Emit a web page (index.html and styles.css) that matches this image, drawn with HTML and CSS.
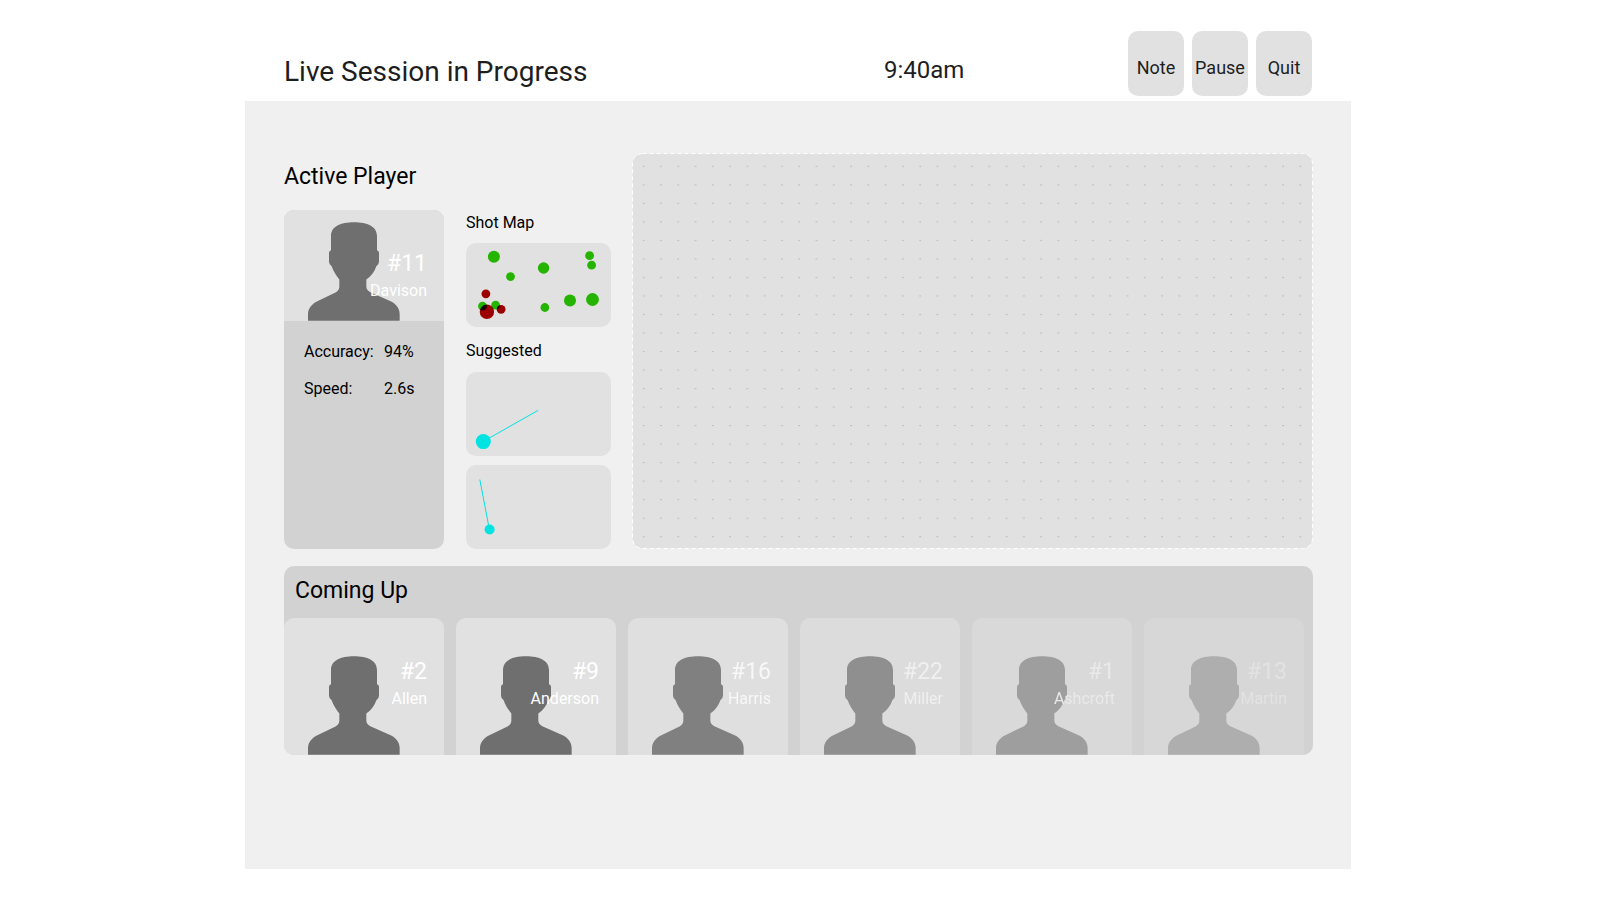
FILE: index.html
```html
<!DOCTYPE html>
<html lang="en">
<head>
	<meta charset="utf-8">
	<title>Live Session</title>
	<link rel="stylesheet" href="styles.css">
</head>
<body>
	<svg class="defs" aria-hidden="true">
		<symbol id="person" viewBox="0 0 276 296">
			<path d="M0 296V276C0 258 12 245 28 237L84 210Q94 204 94 194V172C86 162 76 147 71 132Q63 128 63 118V92Q63 86 69 84V42C69 12 98 0 138 0S207 12 207 42V84Q213 86 213 92V118Q213 128 205 132C200 147 190 162 175 172V194Q175 204 187 210L248 237C264 245 275 258 275 276V296Z"/>
		</symbol>
	</svg>
	<div class="page">
		<header class="header">
			<h1 class="title">Live Session in Progress</h1>
			<time class="clock">9:40am</time>
			<div class="actions">
				<button class="btn" type="button">Note</button>
				<button class="btn" type="button">Pause</button>
				<button class="btn" type="button">Quit</button>
			</div>
		</header>
		<main class="main">
			<div class="session">
				<section class="active">
					<h2 class="heading">Active Player</h2>
					<div class="active-row">
						<div class="player-card">
							<div class="portrait">
								<svg class="person"><use href="#person"/></svg>
								<p class="label"><span class="number">#11</span><span class="name">Davison</span></p>
							</div>
							<dl class="stats">
								<dt>Accuracy:</dt><dd>94%</dd>
								<dt>Speed:</dt><dd>2.6s</dd>
							</dl>
						</div>
						<div class="maps">
							<h3 class="subheading">Shot Map</h3>
							<svg class="map" viewBox="0 0 145 84">
								<g class="shots">
									<circle cx="27.9" cy="13.8" r="6"/>
									<circle cx="44.5" cy="33.6" r="4.4"/>
									<circle cx="77.6" cy="25" r="5.7"/>
									<circle cx="123.6" cy="12.7" r="4.4"/>
									<circle cx="125.6" cy="22.2" r="4.4"/>
									<circle cx="126.5" cy="56.5" r="6.4"/>
									<circle cx="104" cy="57.4" r="6"/>
									<circle cx="78.9" cy="64.5" r="4.4"/>
									<circle cx="16.5" cy="63.2" r="4.4"/>
									<circle cx="29.6" cy="62.2" r="4.4"/>
									<circle class="miss" cx="19.9" cy="50.8" r="4.4"/>
									<circle class="miss" cx="35.1" cy="66.3" r="4.4"/>
									<circle class="miss" cx="20.9" cy="68.8" r="7.2"/>
								</g>
							</svg>
							<h3 class="subheading spaced">Suggested</h3>
							<svg class="map aim" viewBox="0 0 145 84">
								<path d="M17.2 69.5L72.2 38.3"/>
								<circle cx="17.3" cy="69.6" r="7.5"/>
							</svg>
							<svg class="map aim" viewBox="0 0 145 84">
								<path d="M23.4 64.5L13.8 14.5"/>
								<circle cx="23.6" cy="64.5" r="5"/>
							</svg>
						</div>
					</div>
				</section>
				<section class="court">
					<svg class="dots">
						<pattern id="dot" x="3" y="4" width="17.28" height="18.52" patternUnits="userSpaceOnUse">
							<circle cx="8.7" cy="9.3" r="0.6" fill="#999"/>
						</pattern>
						<rect class="edge" x="0.5" y="0.5" rx="10"/>
						<rect x="3" y="4" width="99%" height="98%" fill="url(#dot)"/>
					</svg>
				</section>
			</div>
			<section class="queue">
				<h2 class="heading queue-heading">Coming Up</h2>
				<ul class="queue-list">
					<li class="queue-card">
						<svg class="person"><use href="#person"/></svg>
						<p class="label"><span class="number">#2</span><span class="name">Allen</span></p>
					</li>
					<li class="queue-card">
						<svg class="person"><use href="#person"/></svg>
						<p class="label"><span class="number">#9</span><span class="name">Anderson</span></p>
					</li>
					<li class="queue-card third">
						<svg class="person"><use href="#person"/></svg>
						<p class="label"><span class="number">#16</span><span class="name">Harris</span></p>
					</li>
					<li class="queue-card fourth">
						<svg class="person"><use href="#person"/></svg>
						<p class="label"><span class="number">#22</span><span class="name">Miller</span></p>
					</li>
					<li class="queue-card fifth">
						<svg class="person"><use href="#person"/></svg>
						<p class="label"><span class="number">#1</span><span class="name">Ashcroft</span></p>
					</li>
					<li class="queue-card sixth">
						<svg class="person"><use href="#person"/></svg>
						<p class="label"><span class="number">#13</span><span class="name">Martin</span></p>
					</li>
				</ul>
			</section>
		</main>
	</div>
</body>
</html>
```
FILE: styles.css
```css
* {
	box-sizing: border-box;
}

body {
	margin: 0;
	padding-right: 4px;
	background-color: #fff;
	color: #000;
	font-family: Roboto, sans-serif;
}

h1, h2, h3, p, dl, dd, ul {
	margin: 0;
	padding: 0;
	font-weight: 400;
}

.defs {
	display: none;
}

.page {
	max-width: 1106px;
	margin: 0 auto;
}

.header {
	display: flex;
	align-items: flex-end;
	padding: 31px 39px 5px;
	color: #1e1e1e;
}

.title {
	flex: 1;
	margin-bottom: 6px;
	font-size: 28px;
	line-height: 36px;
}

.clock {
	width: 244px;
	margin-bottom: 10px;
	font-size: 24px;
	line-height: 32px;
}

.actions {
	display: flex;
	gap: 8px;
}

.btn {
	width: 56px;
	height: 65px;
	padding: 8px 0 0;
	border: 0;
	border-radius: 10px;
	background-color: #e1e1e1;
	color: #1e1e1e;
	font-family: inherit;
	font-size: 18px;
	line-height: 24px;
	cursor: pointer;
}

.main {
	min-height: 768px;
	padding: 52px 38px 40px 39px;
	background-color: #f0f0f0;
}

.session {
	display: flex;
	gap: 21px;
}

.heading {
	font-size: 23px;
	line-height: 48px;
}

.active-row {
	display: flex;
	gap: 22px;
	margin-top: 9px;
}

.player-card {
	width: 160px;
	border-radius: 10px;
	background-color: #d2d2d2;
	overflow: hidden;
}

/* silhouette and label share one cell so the name can run over the shoulder */
.portrait,
.queue-card {
	display: grid;
	grid-template-columns: 100%;
	align-items: end;
	background-color: #e1e1e1;
}

.portrait {
	height: 111px;
}

.person {
	grid-area: 1 / 1;
	width: 92px;
	height: 99px;
	margin-left: 24px;
	fill: #6f6f6f;
}

.label {
	display: flex;
	flex-direction: column;
	grid-area: 1 / 1;
	z-index: 1;
	padding: 0 17px 17px 0;
	color: #fff;
	text-align: right;
}

.number {
	font-size: 23px;
	line-height: 28px;
}

.name {
	font-size: 16px;
	line-height: 26px;
}

.stats {
	display: grid;
	grid-template-columns: 80px 1fr;
	padding: 12px 0 0 20px;
	font-size: 16px;
	line-height: 37px;
}

.maps {
	display: flex;
	flex-direction: column;
	width: 145px;
}

.subheading {
	margin-bottom: 7px;
	font-size: 16px;
	line-height: 26px;
}

.spaced {
	margin-top: 11px;
	margin-bottom: 8px;
}

.map {
	width: 100%;
	height: 84px;
	border-radius: 10px;
	background-color: #e1e1e1;
}

.shots {
	fill: #25b400;
	isolation: isolate;
}

.miss {
	fill: #9d0000;
	mix-blend-mode: multiply;
}

.aim {
	fill: #00e3e3;
}

.aim path {
	stroke: #00e3e3;
	stroke-width: 1;
}

.aim + .aim {
	margin-top: 9px;
}

.court {
	display: flex;
	flex: 1;
}

.dots {
	width: 100%;
	height: 396px;
}

.edge {
	width: calc(100% - 1px);
	height: calc(100% - 1px);
	fill: #e1e1e1;
	stroke: #fff;
	stroke-dasharray: 4 3;
}

.queue {
	margin-top: 17px;
	border-radius: 10px;
	background-color: #d2d2d2;
	overflow: hidden;
}

.queue-heading {
	padding: 1px 11px 3px;
}

.queue-list {
	display: flex;
	gap: 12px;
	padding-right: 9px;
	list-style: none;
}

.queue-card {
	flex: 1;
	height: 137px;
	border-radius: 10px 10px 0 0;
}

.queue-card .label {
	padding-bottom: 43px;
}

.third {
	opacity: 0.83;
}

.fourth {
	opacity: 0.67;
}

.fifth {
	opacity: 0.52;
}

.sixth {
	opacity: 0.36;
}
```
